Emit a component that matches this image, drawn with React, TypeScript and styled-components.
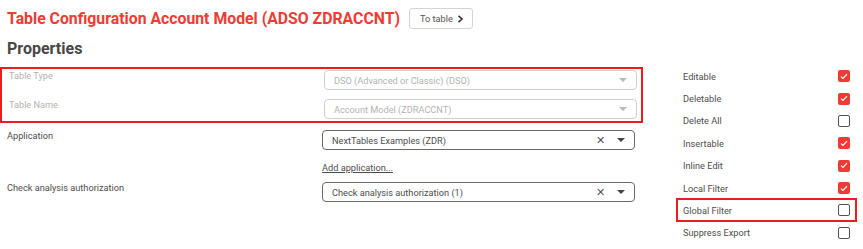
import styled, { createGlobalStyle } from "styled-components";

const GlobalStyle = createGlobalStyle`
  html, body {
    margin: 0;
    padding: 0;
    background: #ffffff;
    font-family: Roboto, "Liberation Sans", Arial, sans-serif;
  }
`;

const RED = "#ee3b33";

const S = {
  Page: styled.div`
    width: 863px;
    height: 249px;
    overflow: hidden;
    background: #fff;
  `,
  Header: styled.div`
    display: flex;
    align-items: center;
    gap: 9px;
    padding: 8px 0 0 7px;
    height: 21px;
  `,
  Title: styled.h1`
    margin: 0;
    font-size: 15.8px;
    font-weight: 700;
    color: ${RED};
    white-space: nowrap;
  `,
  ToTable: styled.button`
    display: flex;
    align-items: center;
    gap: 4px;
    height: 21px;
    padding: 0 8px 0 10px;
    border: 1px solid #d4d4d4;
    border-radius: 3px;
    background: #fff;
    font-family: inherit;
    font-size: 9.2px;
    color: #555;
  `,
  Heading: styled.h2`
    margin: 0;
    padding: 10px 0 0 7px;
    height: 28px;
    box-sizing: border-box;
    font-size: 16px;
    font-weight: 700;
    color: #474747;
  `,
  Body: styled.div`
    display: flex;
    padding-top: 10px;
  `,
  Left: styled.div`
    width: 643px;
    display: flex;
    flex-direction: column;
  `,
  Highlight: styled.div`
    border: 2px solid #f21b1b;
    box-sizing: border-box;
    height: 56px;
    padding-top: 1px;
    display: flex;
    flex-direction: column;
  `,
  Row: styled.div<{ $h: number }>`
    display: flex;
    height: ${({ $h }) => $h}px;
  `,
  Label: styled.div<{ $disabled?: boolean }>`
    width: 315px;
    padding-left: 7px;
    padding-top: 0;
    font-size: 9.2px;
    color: ${({ $disabled }) => ($disabled ? "#b3b3b3" : "#4d4d4d")};
  `,
  Select: styled.div<{ $disabled?: boolean }>`
    width: 313px;
    height: 20px;
    box-sizing: border-box;
    border: 1px solid ${({ $disabled }) => ($disabled ? "#cfcfcf" : "#6a6a6a")};
    border-radius: 4px;
    display: flex;
    align-items: center;
    padding: 0 9px 0 9px;
    font-size: 9.2px;
    color: ${({ $disabled }) => ($disabled ? "#b3b3b3" : "#4d4d4d")};
  `,
  SelectText: styled.span`
    flex: 1;
  `,
  Clear: styled.span`
    font-size: 11px;
    color: #555;
    margin-right: 12px;
  `,
  Caret: styled.span<{ $disabled?: boolean }>`
    width: 0;
    height: 0;
    border-left: 4px solid transparent;
    border-right: 4px solid transparent;
    border-top: 4px solid ${({ $disabled }) => ($disabled ? "#b8b8b8" : "#444")};
  `,
  LinkRow: styled.div`
    height: 31px;
    padding-left: 322px;
    padding-top: 2px;
    box-sizing: border-box;
    display: flex;
    align-items: center;
  `,
  Link: styled.a`
    font-size: 9.2px;
    color: #4d4d4d;
    text-decoration: underline;
  `,
  Right: styled.div`
    margin-left: 33px;
    margin-top: -2px;
    width: 181px;
    display: flex;
    flex-direction: column;
  `,
  Flag: styled.div<{ $marked?: boolean }>`
    height: ${({ $marked }) => ($marked ? "24px" : "22.4px")};
    margin: ${({ $marked }) => ($marked ? "-1px 0 -0.6px" : "0")};
    box-sizing: border-box;
    border: ${({ $marked }) => ($marked ? "2px solid #f21b1b" : "2px solid transparent")};
    display: flex;
    align-items: center;
    justify-content: space-between;
    padding: 0 5px 0 5px;
    font-size: 9.2px;
    color: #4d4d4d;
  `,
  Box: styled.span<{ $checked?: boolean }>`
    width: 12px;
    height: 12px;
    box-sizing: border-box;
    border-radius: 2px;
    display: flex;
    align-items: center;
    justify-content: center;
    background: ${({ $checked }) => ($checked ? RED : "#fff")};
    border: ${({ $checked }) => ($checked ? "none" : "1.5px solid #555")};
  `,
};

const Check = () => (
  <svg width="8" height="7" viewBox="0 0 8 7">
    <path d="M1 3.6 L3 5.5 L7 1.2" fill="none" stroke="#fff" strokeWidth="1.2" />
  </svg>
);

const flags = [
  { label: "Editable", checked: true },
  { label: "Deletable", checked: true },
  { label: "Delete All", checked: false },
  { label: "Insertable", checked: true },
  { label: "Inline Edit", checked: true },
  { label: "Local Filter", checked: true },
  { label: "Global Filter", checked: false, marked: true },
  { label: "Suppress Export", checked: false },
];

export default function App() {
  return (
    <S.Page>
      <GlobalStyle />
      <S.Header>
        <S.Title>Table Configuration Account Model (ADSO ZDRACCNT)</S.Title>
        <S.ToTable>
          To table
          <svg width="7" height="8" viewBox="0 0 7 8">
            <path d="M1.5 0.8 L5 4 L1.5 7.2" fill="none" stroke="#333" strokeWidth="1.6" />
          </svg>
        </S.ToTable>
      </S.Header>
      <S.Heading>Properties</S.Heading>
      <S.Body>
        <S.Left>
          <S.Highlight>
            <S.Row $h={29}>
              <S.Label $disabled>Table Type</S.Label>
              <S.Select $disabled>
                <S.SelectText>DSO (Advanced or Classic) (DSO)</S.SelectText>
                <S.Caret $disabled />
              </S.Select>
            </S.Row>
            <S.Row $h={22}>
              <S.Label $disabled>Table Name</S.Label>
              <S.Select $disabled>
                <S.SelectText>Account Model (ZDRACCNT)</S.SelectText>
                <S.Caret $disabled />
              </S.Select>
            </S.Row>
          </S.Highlight>
          <S.Row $h={21} style={{ marginTop: 7 }}>
            <S.Label>Application</S.Label>
            <S.Select>
              <S.SelectText>NextTables Examples (ZDR)</S.SelectText>
              <S.Clear>✕</S.Clear>
              <S.Caret />
            </S.Select>
          </S.Row>
          <S.LinkRow>
            <S.Link>Add application...</S.Link>
          </S.LinkRow>
          <S.Row $h={21}>
            <S.Label>Check analysis authorization</S.Label>
            <S.Select>
              <S.SelectText>Check analysis authorization (1)</S.SelectText>
              <S.Clear>✕</S.Clear>
              <S.Caret />
            </S.Select>
          </S.Row>
        </S.Left>
        <S.Right>
          {flags.map((f) => (
            <S.Flag key={f.label} $marked={f.marked}>
              <span>{f.label}</span>
              <S.Box $checked={f.checked}>{f.checked && <Check />}</S.Box>
            </S.Flag>
          ))}
        </S.Right>
      </S.Body>
    </S.Page>
  );
}
